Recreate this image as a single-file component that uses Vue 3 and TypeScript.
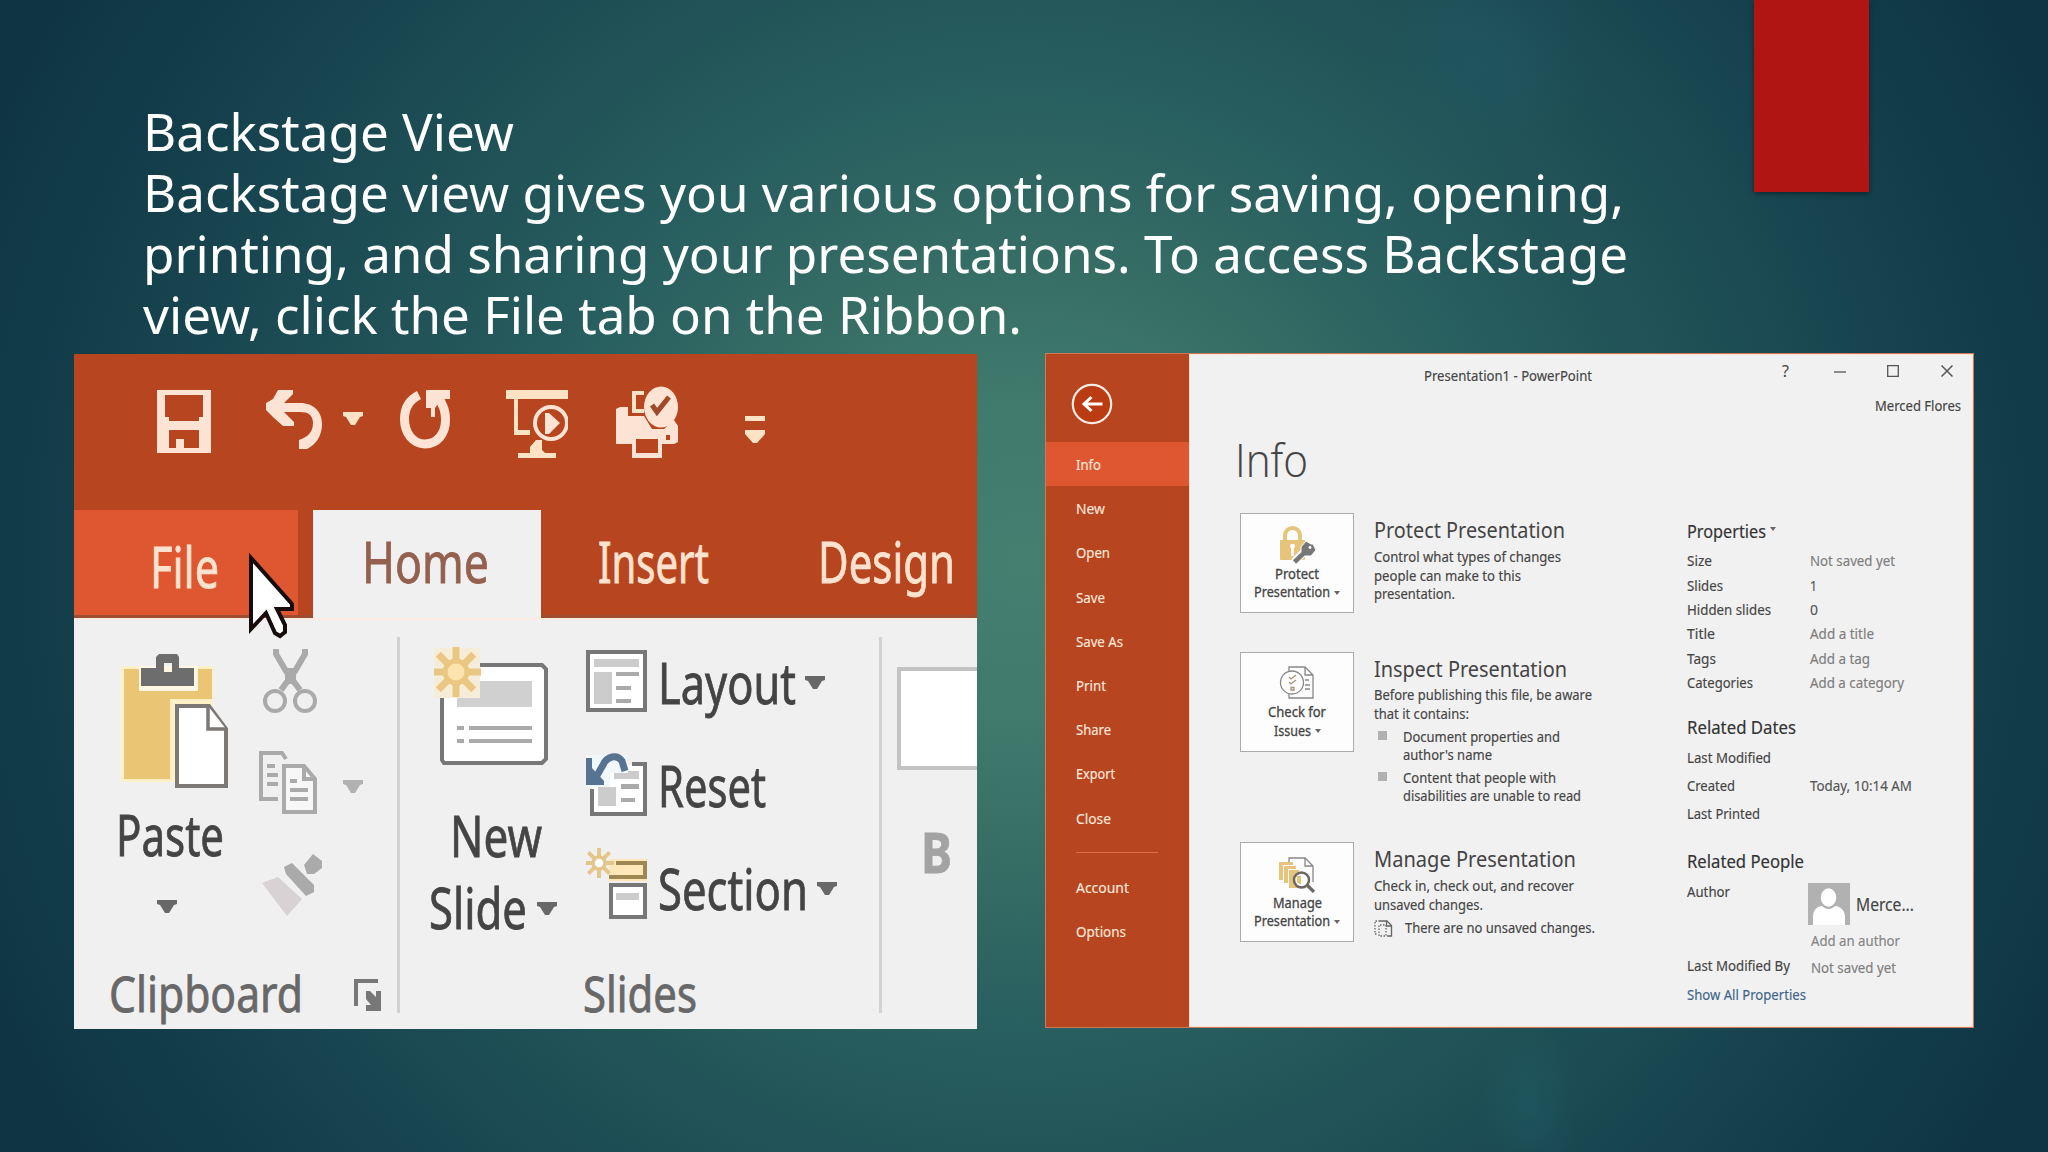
<script setup lang="ts">
import type { Directive } from 'vue'

// Stretches a single line of text horizontally to the given width in pixels.
const vFit: Directive<HTMLElement, number> = {
  mounted(el, { value }) {
    const natural = el.getBoundingClientRect().width
    el.style.transform = `scaleX(${value / natural})`
    el.style.marginRight = `${value - natural}px`
  },
}

interface Line { t: string; w: number }
interface Prop { k: Line; v?: Line; dark?: boolean; h: number }

const intro: Line[] = [
  { t: 'Backstage View', w: 371 },
  { t: 'Backstage view gives you various options for saving, opening,', w: 1481 },
  { t: 'printing, and sharing your presentations. To access Backstage', w: 1485 },
  { t: 'view, click the File tab on the Ribbon.', w: 879 },
]
const nav: Line[] = [
  { t: 'Info', w: 25 }, { t: 'New', w: 29 }, { t: 'Open', w: 34 }, { t: 'Save', w: 29 },
  { t: 'Save As', w: 47 }, { t: 'Print', w: 30 }, { t: 'Share', w: 35 }, { t: 'Export', w: 39 },
  { t: 'Close', w: 35 },
]
const nav2: Line[] = [{ t: 'Account', w: 53 }, { t: 'Options', w: 50 }]
const props: Prop[] = [
  { k: { t: 'Size', w: 25 }, v: { t: 'Not saved yet', w: 85 }, h: 24.4 },
  { k: { t: 'Slides', w: 36 }, v: { t: '1', w: 7 }, dark: true, h: 24.4 },
  { k: { t: 'Hidden slides', w: 84 }, v: { t: '0', w: 8 }, dark: true, h: 24.4 },
  { k: { t: 'Title', w: 28 }, v: { t: 'Add a title', w: 64 }, h: 24.4 },
  { k: { t: 'Tags', w: 29 }, v: { t: 'Add a tag', w: 60 }, h: 24.4 },
  { k: { t: 'Categories', w: 66 }, v: { t: 'Add a category', w: 94 }, h: 24.4 },
]
const dates: Prop[] = [
  { k: { t: 'Last Modified', w: 84 }, h: 28 },
  { k: { t: 'Created', w: 48 }, v: { t: 'Today, 10:14 AM', w: 102 }, dark: true, h: 28 },
  { k: { t: 'Last Printed', w: 73 }, h: 28 },
]
const rays = [0, 45, 90, 135, 180, 225, 270, 315]
const caret = 'M0 0H20V4L17 5L12 13H8L3 5L0 4Z'
</script>

<template>
  <main class="slide">
    <div class="ribbon-mark"></div>
    <header class="intro">
      <div v-for="l in intro" :key="l.t"><span v-fit="l.w" class="fit">{{ l.t }}</span></div>
    </header>

    <div class="shots">
      <section class="office">
        <div class="quick">
          <svg class="q-save" width="54" height="63" viewBox="0 0 54 63">
            <path fill="#fde3d3" fill-rule="evenodd" d="M0 0H54V63H0ZM8 5V27H12V31H42V27H46V5ZM12 40V58H19V49H27V58H42V40Z" />
          </svg>
          <svg class="q-undo" width="56" height="60" viewBox="0 0 56 60">
            <path fill="#fde3d3" d="M12 0H27V4L18 13H34C48 13 56 22 56 34C56 47 49 55 41 59H33V50C42 47 47 42 47 33C47 25 42 22 34 22H18L28 32V36H17L8 28L0 20V13L7 9Z" />
          </svg>
          <svg class="q-caret" width="20" height="13" viewBox="0 0 20 13"><path fill="#fde3c4" :d="caret" /></svg>
          <svg class="q-redo" width="50" height="60" viewBox="0 0 50 60">
            <path fill="none" stroke="#fde3d3" stroke-width="9" d="M19 5C9 10 4.500 19 4.500 29C4.500 43 13 54 25 54C37 54 45.500 44 45.500 30C45.500 20 43 16 40 10" />
            <path fill="#fde3d3" d="M26 0H50V9H42L35 18V27H31V18H26Z" />
          </svg>
          <svg class="q-show" width="62" height="68" viewBox="0 0 62 68">
            <path fill="#fde3c4" d="M0 0H62V9H0ZM8 9H12V40H24V45H8ZM12 63H50V68H12ZM24 57L30 50H36V60L40 64H24Z" />
            <circle cx="45" cy="33" r="16" fill="none" stroke="#fde3d3" stroke-width="4" />
            <path fill="#fde3d3" d="M39 23H43L54 33L43 44H39Z" />
          </svg>
          <svg class="q-print" width="62" height="72" viewBox="0 0 62 72">
            <path fill="#fde3d3" d="M0 23L4 21H12V30H28L36 43H48L58 34L62 40V56L58 58H46V72H16V58H0Z" />
            <path fill="#b74520" d="M20 53H42V67H20ZM50 49H54V54H50Z" />
            <path fill="none" stroke="#fde3c4" stroke-width="4" d="M28 7H18V25H28" />
            <ellipse cx="45" cy="21" rx="17" ry="20.500" fill="#fde3d3" />
            <path fill="none" stroke="#a04a2c" stroke-width="5" d="M36 19L41 26L53 11" />
          </svg>
          <svg class="q-more" width="20" height="28" viewBox="0 0 20 28"><path fill="#fde3c4" d="M0 0H20V5H0ZM0 14H20V18L12 27H8L0 18Z" /></svg>
        </div>
        <nav class="tabs">
          <div class="tab file"><span v-fit="69" class="fit">File</span></div>
          <div class="tab home"><span v-fit="127" class="fit">Home</span></div>
          <div class="tab insert"><span v-fit="111" class="fit">Insert</span></div>
          <div class="tab design"><span v-fit="137" class="fit">Design</span></div>
          <svg class="pointer" width="48" height="86" viewBox="0 0 48 86">
            <path fill="#fff" stroke="#170c0c" stroke-width="4" stroke-linejoin="miter" d="M4 5V76L19 60L28 80L33 83L38 79V72L30 56H45V51Z" />
          </svg>
        </nav>
        <div class="groups">
          <div class="group clip">
            <div class="tools">
              <div class="paste">
                <svg width="108" height="136" viewBox="0 0 108 136">
                  <path fill="#fff0c8" d="M0 12H92V52H54V128H0Z" />
                  <path fill="#eac674" d="M3 15H91V45H49V125H3Z" />
                  <path fill="#fff6e4" d="M18 12H77V37H18Z" />
                  <path fill="#6d6d6d" fill-rule="evenodd" d="M35 3L38 0H56L58 3V14H73V32H20V14H35ZM43 9V18H51V9Z" />
                  <path fill="#fff" stroke="#7b7876" stroke-width="4" d="M56 52H88L105 75V132H56Z" />
                  <path fill="#fff" stroke="#7b7876" stroke-width="3.500" d="M87 52V75H105" />
                </svg>
                <span v-fit="108" class="fit big">Paste</span>
                <svg class="dn" width="20" height="13" viewBox="0 0 20 13"><path fill="#686868" :d="caret" /></svg>
              </div>
              <div class="edit">
                <svg class="cut" width="54" height="66" viewBox="0 0 54 66">
                  <g fill="none" stroke="#aaa"><path stroke-width="6" d="M13 1V6L23 23L37 42M42 1V6L32 23L18 42" /><circle cx="12" cy="53" r="10" stroke-width="4" /><circle cx="42" cy="53" r="10" stroke-width="4" /></g>
                  <path fill="#aaa" d="M22 20H33V36H22Z" />
                </svg>
                <div class="copy">
                  <svg width="58" height="64" viewBox="0 0 58 64">
                    <g fill="none" stroke="#aaa" stroke-width="4"><path d="M19 48H2V2H23L27 8M8 15H16M8 24H19M8 33H19" /><path fill="#f7f7f7" d="M25 15H45L56 28V61H25Z" /><path d="M45 16V28H56M31 30H38M31 39H49M31 48H49" /></g>
                  </svg>
                  <svg class="dn2" width="20" height="13" viewBox="0 0 20 13"><path fill="#b3b0b0" :d="caret" /></svg>
                </div>
                <svg class="brush" width="60" height="62" viewBox="0 0 60 62">
                  <path fill="#d8d2d4" d="M0 29L16 23L40 45L25 62Z" /><path fill="#aaa" d="M22 13L30 9L52 31V38L44 42L24 20Z" /><path fill="#aaa" d="M42 11L51 0L60 7V14L52 20H45Z" />
                </svg>
              </div>
            </div>
            <div class="foot"><span v-fit="194" class="fit mid">Clipboard</span>
              <svg width="28" height="32" viewBox="0 0 28 32"><path fill="#777" d="M0 0H24V4H4V27H0ZM12 12H16L22 18V12H27V32H12V26H17L12 20Z" /></svg>
            </div>
          </div>
          <div class="group slides">
            <div class="tools">
              <div class="newslide">
                <svg width="116" height="124" viewBox="0 0 116 124">
                  <path fill="#fff" stroke="#777" stroke-width="4" d="M10 21H108L112 25V115L108 119H10L8 116V21Z" />
                  <path fill="#d0d0d0" d="M23 37H98V63H23Z" />
                  <path fill="#aaa" d="M23 82H30V86H23ZM35 82H98V86H35ZM23 95H30V99H23ZM35 95H98V99H35Z" />
                  <path fill="#f6edd8" d="M0 4H46V54H0Z" />
                  <g stroke="#e9c782" stroke-width="7"><line v-for="a in rays" :key="a" x1="22" y1="19" x2="22" y2="3" :transform="`rotate(${a} 22 28)`" /></g>
                  <circle cx="22" cy="28" r="11" fill="#fde4ae" stroke="#ebc881" stroke-width="5" />
                </svg>
                <span v-fit="92" class="fit big new">New</span>
                <div class="sl"><span v-fit="98" class="fit big">Slide</span><svg width="20" height="13" viewBox="0 0 20 13"><path fill="#686868" :d="caret" /></svg></div>
              </div>
              <div class="menu">
                <div class="item">
                  <svg width="61" height="63" viewBox="0 0 61 63"><path fill="#fff" stroke="#777" stroke-width="4" d="M2 2H59V60H2Z" /><path fill="#ccc" d="M8 9H53V17H8ZM8 22H26V54H8Z" /><path fill="#aaa" d="M30 22H53V26H30ZM30 36H45V40H30ZM30 49H45V53H30Z" /></svg>
                  <span v-fit="138" class="fit big">Layout</span><svg class="c" width="20" height="13" viewBox="0 0 20 13"><path fill="#686868" :d="caret" /></svg>
                </div>
                <div class="item">
                  <svg width="61" height="63" viewBox="0 0 61 63"><path fill="#fff" d="M6 12H59V61H6Z" /><path fill="none" stroke="#777" stroke-width="4" d="M46 11H59V61H6V36" /><path fill="#ccc" d="M28 18H53V26H28ZM12 34H30V53H12Z" /><path fill="#aaa" d="M35 31H53V36H35ZM35 45H49V49H35Z" /><path fill="#f0f7fd" d="M0 2H42V20H24V34H0Z" /><path fill="none" stroke="#577391" stroke-width="7" d="M9 26L17 12C21 3 31 1 36 8L39 18" /><path fill="#577391" d="M0 5H6V15L18 28V32H0Z" /></svg>
                  <span v-fit="108" class="fit big">Reset</span>
                </div>
                <div class="item sec">
                  <svg width="61" height="72" viewBox="0 0 61 72"><path fill="#ffe7ba" d="M23 12H61V34H23Z" /><path fill="none" stroke="#9f8754" stroke-width="4" d="M30 16H59V30H23" /><path fill="#fff" stroke="#777" stroke-width="4" d="M25 38H59V70H25Z" /><path fill="#ccc" d="M30 46H53V53H30Z" />
                    <g stroke="#e3c68c" stroke-width="4"><line v-for="a in rays" :key="a" x1="13" y1="9" x2="13" y2="1" :transform="`rotate(${a} 13 16)`" /></g><circle cx="13" cy="16" r="6" fill="#fff" stroke="#e3c68c" stroke-width="3.500" />
                  </svg>
                  <span v-fit="150" class="fit big">Section</span><svg class="c" width="20" height="13" viewBox="0 0 20 13"><path fill="#686868" :d="caret" /></svg>
                </div>
              </div>
            </div>
            <div class="foot"><span v-fit="114" class="fit mid">Slides</span></div>
          </div>
          <div class="group font">
            <div class="combo"></div>
            <b v-fit="31" class="fit">B</b>
          </div>
        </div>
      </section>

      <section class="backstage">
        <aside>
          <svg class="back" width="42" height="42" viewBox="0 0 42 42"><circle cx="21" cy="21" r="19.200" fill="#bb3c12" stroke="#fdeee4" stroke-width="2.200" /><path fill="none" stroke="#fff" stroke-width="3" d="M31.500 21H13M20.500 14L13 21L20.500 28" /></svg>
          <div v-for="(l, i) in nav" :key="l.t" class="nav" :class="{ on: i === 0 }"><span v-fit="l.w" class="fit">{{ l.t }}</span></div>
          <hr />
          <div v-for="l in nav2" :key="l.t" class="nav"><span v-fit="l.w" class="fit">{{ l.t }}</span></div>
        </aside>
        <div class="page">
          <div class="titlebar">
            <span v-fit="168" class="fit">Presentation1 - PowerPoint</span>
            <div class="win">
              <span class="q">?</span>
              <svg width="12" height="12" viewBox="0 0 12 12"><path stroke="#555" stroke-width="1.300" d="M0 7H12" /></svg>
              <svg width="12" height="12" viewBox="0 0 12 12"><path fill="none" stroke="#555" stroke-width="1.300" d="M.7.7H11.300V11.300H.7Z" /></svg>
              <svg width="12" height="12" viewBox="0 0 12 12"><path stroke="#555" stroke-width="1.500" d="M.5.500L11.500 11.500M11.500.500L.5 11.500" /></svg>
            </div>
          </div>
          <div class="user"><span v-fit="86" class="fit">Merced Flores</span></div>
          <h1><span v-fit="73" class="fit">Info</span></h1>
          <div class="cols">
            <div class="actions">
              <div class="action a1">
                <div class="card">
                  <svg width="37" height="38" viewBox="0 0 37 38">
                    <path fill="none" stroke="#e6c47b" stroke-width="4" d="M6 16V9.500A7.500 7.500 0 0 1 21 9.500V16" /><rect x="1" y="14" width="25" height="20" rx="1" fill="#e6c47b" />
                    <path fill="#fff" d="M11 20C11 17 16 17 16 20L14.800 23V30H12.200V23Z" />
                    <path fill="none" stroke="#fdfdfd" stroke-width="8" d="M15 36L24 27" />
                    <path fill="#777" stroke="#fdfdfd" stroke-width="1" d="M27 15L32 18H34L37 24L32 30L26 30L22 26V21Z" />
                    <path fill="none" stroke="#777" stroke-width="4.500" d="M15.500 36L26 26" /><circle cx="31" cy="21.500" r="1.400" fill="#fff" />
                  </svg>
                  <span v-fit="44" class="fit">Protect</span>
                  <div><span v-fit="76" class="fit">Presentation</span><i></i></div>
                </div>
                <div class="desc">
                  <h2><span v-fit="191" class="fit">Protect Presentation</span></h2>
                  <p><span v-fit="187" class="fit">Control what types of changes</span></p>
                  <p><span v-fit="147" class="fit">people can make to this</span></p>
                  <p><span v-fit="81" class="fit">presentation.</span></p>
                </div>
              </div>
              <div class="action a2">
                <div class="card">
                  <svg width="37" height="38" viewBox="0 0 37 38">
                    <g fill="none" stroke="#888" stroke-width="1.300"><path d="M10 8V3H26L34 11V34H10V29M26 3V11H34M26 16H30M26 21H31M26 25H31" /><circle cx="13" cy="18.500" r="11.500" fill="#fff" /></g><path fill="none" stroke="#a89077" stroke-width="1.300" d="M10 13L12 15L17 11M10 18L12 20L17 16M12 23.500H15V26H12Z" />
                  </svg>
                  <span v-fit="58" class="fit">Check for</span>
                  <div><span v-fit="37" class="fit">Issues</span><i></i></div>
                </div>
                <div class="desc">
                  <h2><span v-fit="193" class="fit">Inspect Presentation</span></h2>
                  <p><span v-fit="218" class="fit">Before publishing this file, be aware</span></p>
                  <p><span v-fit="95" class="fit">that it contains:</span></p>
                  <ul>
                    <li><p><span v-fit="157" class="fit">Document properties and</span></p><p><span v-fit="89" class="fit">author's name</span></p></li>
                    <li><p><span v-fit="153" class="fit">Content that people with</span></p><p><span v-fit="178" class="fit">disabilities are unable to read</span></p></li>
                  </ul>
                </div>
              </div>
              <div class="action a3">
                <div class="card">
                  <svg width="37" height="38" viewBox="0 0 37 38">
                    <path fill="none" stroke="#888" stroke-width="1.300" d="M10 7V3H26L34 11V27M26 3V11H34M27 31H10" />
                    <path fill="#e6c47b" d="M0 7H14V10H4V25H0ZM5 11H17V14H9V28H5ZM10 15H20V33H10Z" /><circle cx="22.500" cy="25" r="7.500" fill="#fff" stroke="#6d6864" stroke-width="2.500" /><path fill="#e6c47b" d="M18 21H22V29H20L18 27Z" /><path stroke="#6d6864" stroke-width="3.200" d="M28 30L35 37" />
                  </svg>
                  <span v-fit="49" class="fit">Manage</span>
                  <div><span v-fit="76" class="fit">Presentation</span><i></i></div>
                </div>
                <div class="desc">
                  <h2><span v-fit="202" class="fit">Manage Presentation</span></h2>
                  <p><span v-fit="200" class="fit">Check in, check out, and recover</span></p>
                  <p><span v-fit="109" class="fit">unsaved changes.</span></p>
                  <div class="note">
                    <svg width="19" height="18" viewBox="0 0 19 18"><g fill="none" stroke="#666" stroke-width="1.300"><path stroke-dasharray="1.500 1.500" d="M6 1H1V14H4M5 16V5H12V16H5" /><path d="M6 1H13L17.500 5.500V16H13M12.500 1V6H17" /></g></svg>
                    <span v-fit="190" class="fit">There are no unsaved changes.</span>
                  </div>
                </div>
              </div>
            </div>
            <div class="info">
              <h3 class="ph"><span v-fit="79" class="fit">Properties</span><i></i></h3>
              <div v-for="p in props" :key="p.k.t" class="row" :style="{ height: p.h + 'px' }">
                <div class="key"><span v-fit="p.k.w" class="fit">{{ p.k.t }}</span></div>
                <div v-if="p.v" class="val" :class="{ dark: p.dark }"><span v-fit="p.v.w" class="fit">{{ p.v.t }}</span></div>
              </div>
              <h3 class="dh"><span v-fit="109" class="fit">Related Dates</span></h3>
              <div v-for="p in dates" :key="p.k.t" class="row" :style="{ height: p.h + 'px' }">
                <div class="key"><span v-fit="p.k.w" class="fit">{{ p.k.t }}</span></div>
                <div v-if="p.v" class="val" :class="{ dark: p.dark }"><span v-fit="p.v.w" class="fit">{{ p.v.t }}</span></div>
              </div>
              <h3 class="rh"><span v-fit="117" class="fit">Related People</span></h3>
              <div class="people">
                <div class="key"><span v-fit="43" class="fit">Author</span></div>
                <div class="author">
                  <div class="who">
                    <svg width="42" height="42" viewBox="0 0 42 42"><path fill="#b1b1b1" d="M0 0H42V42H0Z" /><path fill="#fff" d="M5 42V34C5 27 9 23 14 23C18 27 23 27 27 23C32 23 37 27 37 34V42Z" /><ellipse cx="20.500" cy="14.500" rx="8.500" ry="10" fill="#fff" stroke="#b1b1b1" stroke-width="1.500" /></svg>
                    <span v-fit="58" class="fit">Merce...</span>
                  </div>
                  <div class="add"><span v-fit="89" class="fit">Add an author</span></div>
                </div>
              </div>
              <div class="row mod">
                <div class="key"><span v-fit="103" class="fit">Last Modified By</span></div>
                <div class="val"><span v-fit="85" class="fit">Not saved yet</span></div>
              </div>
              <div class="all"><span v-fit="119" class="fit">Show All Properties</span></div>
            </div>
          </div>
        </div>
      </section>
    </div>
  </main>
</template>

<style>
body { margin: 0; overflow: hidden; }
</style>

<style scoped>
* { box-sizing: border-box; margin: 0; padding: 0; }
svg { display: block; flex: none; }
.fit { display: inline-block; white-space: nowrap; transform-origin: 0 50%; flex: none; }
.slide {
  position: relative; width: 2048px; height: 1152px; overflow: hidden;
  font-family: "Noto Sans", "Open Sans", sans-serif; color: #fff;
  background:
    radial-gradient(circle 110px at 1480px 60px, rgba(34, 95, 115, .3), transparent),
    radial-gradient(ellipse 50px 80px at 1530px 1100px, rgba(34, 105, 110, .3), transparent),
    radial-gradient(ellipse 1130px 1080px at 1024px 560px, #457f70 0%, #407a6c 15%, #346b64 30%, #296060 42%, #225558 55%, #1b4a53 70%, #133e4a 85%, #0f3545 100%);
}
.ribbon-mark { position: absolute; left: 1753.500px; top: 0; width: 115px; height: 192px; background: #b01513; box-shadow: 0 2px 5px rgba(0, 0, 0, .4); }
.intro { padding: 100.500px 0 0 143px; height: 353px; font-size: 51px; }
.intro div { height: 61.300px; line-height: 61.300px; }
.shots { display: flex; align-items: flex-start; padding-left: 74px; gap: 68px; }

.office { width: 903px; height: 675px; margin-top: 1px; background: #b74520; overflow: hidden; display: flex; flex-direction: column; }
.office .fit { -webkit-text-stroke: .8px currentColor; }
.quick { height: 156px; display: flex; align-items: flex-start; padding-left: 83px; }
.q-save { margin-top: 36px; }
.q-undo { margin: 36px 0 0 55px; }
.q-caret { margin: 58px 0 0 21px; }
.q-redo { margin: 36px 0 0 37px; }
.q-show { margin: 36px 0 0 56px; }
.q-print { margin: 32px 0 0 48px; }
.q-more { margin: 62px 0 0 67px; }
.tabs { position: relative; display: flex; height: 108px; font-size: 56px; color: #fde3cf; border-bottom: 3px solid #a04c31; }
.tab { height: 105px; line-height: 105px; }
.file { width: 224px; background: #df5730; padding: 4px 0 0 76px; }
.home { width: 228px; height: 108px; margin-left: 15px; background: #f1f0f0; color: #94604f; padding-left: 49px; line-height: 103px; }
.insert { padding-left: 57px; line-height: 103px; }
.design { padding-left: 109px; line-height: 103px; }
.pointer { position: absolute; left: 173px; top: 43px; }
.groups { display: flex; height: 411px; background: #f0f0f0; padding-top: 17px; border-top: 2px solid #fdeae3; }
.group { height: 376px; display: flex; flex-direction: column; color: #444; }
.clip { width: 326px; border-right: 3px solid #d2d2d2; }
.slides { width: 482px; border-right: 3px solid #d2d2d2; }
.tools { display: flex; height: 322px; flex: none; }
.big { font-size: 56px; line-height: 72px; }
.mid { font-size: 50px; line-height: 56px; color: #686868; }
.paste { padding: 17px 0 0 47px; width: 176px; }
.paste .big { margin-top: 8px; margin-left: -5px; display: block; width: max-content; }
.paste .dn { margin: 30px 0 0 36px; }
.edit { padding-top: 11px; }
.cut { margin-left: 13px; }
.copy { display: flex; align-items: center; margin: 37px 0 0 9px; }
.dn2 { margin-left: 26px; margin-top: 6px; }
.brush { margin: 39px 0 0 12px; }
.foot { display: flex; align-items: center; height: 56px; flex: none; margin-top: 6px; }
.clip .foot { padding-left: 35px; }
.clip .foot svg { margin-left: 51px; margin-top: 3px; }
.slides .foot { padding-left: 183px; }
.newslide { width: 172px; padding-left: 33px; padding-top: 7px; }
.newslide svg { margin-left: 1px; }
.newslide .new { display: block; width: max-content; margin: 31px 0 0 17px; }
.sl { display: flex; align-items: center; margin-left: -4px; }
.newslide .sl svg { margin-left: 10px; margin-top: 2px; }
.menu { padding: 13px 0 0 14px; }
.item { display: flex; align-items: center; height: 63px; margin-bottom: 40px; }
.item .fit { margin-left: 11px; }
.item .c { margin-left: 9px; margin-top: 2px; }
.sec svg:first-child { margin-top: -9px; }
.font { width: 95px; padding-left: 15px; }
.combo { margin-top: 30px; width: 90px; height: 103px; background: #fff; border: 4px solid #c3c3c3; flex: none; }
.font b { margin: 43px 0 0 24px; width: max-content; font-size: 56px; line-height: 76px; color: #a3a3a3; }

.backstage { width: 929px; height: 675px; border: 1px solid #ce7a59; display: flex; background: #f1f1f1; color: #444; font-size: 14px; line-height: 18.700px; }
.backstage .fit { -webkit-text-stroke: .15px currentColor; }
aside { width: 142.500px; background: #b74520; color: #fde8dc; padding-top: 29px; }
.back { margin: 0 0 17px 25px; }
.nav { height: 44.200px; line-height: 46px; padding-left: 30px; }
.nav.on { background: #df5730; }
hr { width: 82px; height: 1px; border: 0; background: #dc6b48; margin: 12px 0 12px 30px; }
.page { flex: 1; display: flex; flex-direction: column; border: 1px solid #fae2d4; }
.titlebar { display: flex; height: 40px; padding-left: 234px; padding-top: 12px; }
.win { display: flex; align-items: center; height: 12px; margin-left: 190.500px; margin-top: -2px; gap: 41.500px; }
.q { font-size: 16px; width: 11px; margin-right: -1px; }
.user { padding-left: 685.500px; margin-top: 2px; }
.backstage h1 { font-family: "Open Sans", "Noto Sans", sans-serif; font-weight: 300; font-size: 46px; line-height: 60px; height: 60px; margin: 13.500px 0 0 45px; }
h1 .fit { -webkit-text-stroke: .4px currentColor; }
.cols { display: flex; margin-top: 24px; }
.actions { width: 497.500px; padding-left: 50.500px; flex: none; }
.action { display: flex; }
.a1 { height: 138.500px; }
.a2 { height: 190.500px; }
.card { width: 114px; height: 100px; border: 1px solid #ababab; background: #fdfdfd; display: flex; flex-direction: column; align-items: center; padding-top: 11.500px; flex: none; }
.card .fit { -webkit-text-stroke: .3px currentColor; }
.card svg { margin-bottom: 1px; }
.card div { display: flex; align-items: center; }
i { display: inline-block; border: 3px solid transparent; border-top: 4px solid #666; border-bottom: 0; margin-left: 4px; }
.desc { padding: 3px 0 0 20px; }
h2 { font-weight: 400; font-size: 21.500px; line-height: 28px; height: 31.700px; }
.backstage h2 .fit { -webkit-text-stroke: 0; }
p { height: 18.700px; }
ul { list-style: none; padding-top: 4px; }
li { padding-left: 29px; margin-bottom: 3.500px; background: linear-gradient(#b1b1b1, #b1b1b1) 4px 3px / 9px 9px no-repeat; }
.note { display: flex; align-items: center; gap: 11.500px; margin-top: 5px; }
.info { width: 280px; }
h3 { font-weight: 400; font-size: 17.500px; line-height: 24px; height: 24px; display: flex; align-items: center; color: #333; }
.ph { margin: 6px 0 6.200px; }
.ph i { margin-bottom: 4px; }
.dh { margin: 19.500px 0 5.500px; }
.rh { margin: 20.500px 0 7.500px; }
.row { display: flex; align-items: center; }
.key { width: 123px; }
.val { color: #7d7d7d; }
.dark { color: #555; }
.people { display: flex; }
.people .key { padding-top: 2px; }
.author { margin-left: -2px; padding-top: 2.500px; }
.who { display: flex; align-items: center; gap: 6px; font-size: 17.500px; }
.add { margin: 6.500px 0 0 3px; color: #858585; }
.mod { height: 28px; margin-top: 2px; }
.mod .val { margin: 4px 0 0 1px; }
.all { color: #41658a; margin-top: 6px; }
</style>
